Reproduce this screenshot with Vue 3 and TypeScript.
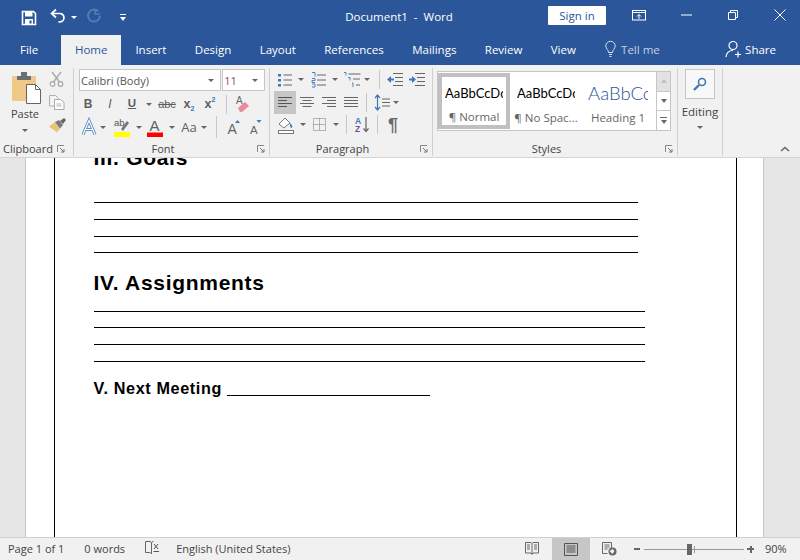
<script setup lang="ts">
const tabs: string[] = ['Insert', 'Design', 'Layout', 'References', 'Mailings', 'Review', 'View']
const goals: number[] = [1, 2, 3, 4]
</script>

<template>
  <div class="app">
    <header class="titlebar">
      <div class="qat">
        <svg class="i-save" width="16" height="16" viewBox="0 0 16 16"><path d="M1.5 1.5h11l2 2v11h-13z" fill="none" stroke="#fff" stroke-width="1.6"/><rect x="4" y="2" width="7.5" height="4.5" fill="#fff"/><rect x="4" y="9" width="8" height="5.5" fill="#fff"/><rect x="8.5" y="10.5" width="2" height="3" fill="#2b579a"/></svg>
        <svg class="i-undo" width="16" height="16" viewBox="0 0 16 16"><path d="M6 1.5 1.5 5.5 6 9.5" fill="none" stroke="#fff" stroke-width="1.7"/><path d="M2 5.5h7.5a4 4 0 0 1 .6 8.3H8.5" fill="none" stroke="#fff" stroke-width="1.7"/></svg>
        <span class="caret w c-undo"></span>
        <svg class="i-redo" width="16" height="16" viewBox="0 0 16 16"><path d="M12.3 3.4A6 6 0 1 0 14 7.8" fill="none" stroke="#5f7fb3" stroke-width="2"/><path d="M9 1v5h5" fill="none" stroke="#5f7fb3" stroke-width="1.6"/></svg>
        <svg class="i-cust" width="6" height="8" viewBox="0 0 6 8"><rect x="0" y="0" width="6" height="1" fill="#fff"/><path d="M0 3h6L3 7z" fill="#fff"/></svg>
      </div>
      <div class="doc-title">Document1&nbsp; -&nbsp; Word</div>
      <button class="signin">Sign in</button>
      <div class="winctl">
        <svg width="14" height="11" viewBox="0 0 14 11"><rect x=".5" y=".5" width="13" height="9.5" fill="none" stroke="#fff"/><path d="M0 2.5h14" stroke="#fff"/><path d="M7 9V4.500M5 6.500l2-2 2 2" fill="none" stroke="#fff"/></svg>
        <svg class="w-min" width="11" height="2" viewBox="0 0 11 2"><path d="M0 1h11" stroke="#fff"/></svg>
        <svg class="w-res" width="10" height="10" viewBox="0 0 10 10"><path d="M.5 2.500h7v7h-7zM2.500 2.500v-2h7v7h-2" fill="none" stroke="#fff"/></svg>
        <svg class="w-cls" width="12" height="12" viewBox="0 0 12 12"><path d="M.5.5l11 11M11.500.5l-11 11" stroke="#fff" fill="none"/></svg>
      </div>
    </header>

    <nav class="tabbar">
      <span class="tab file">File</span>
      <span class="tab home">Home</span>
      <span v-for="t in tabs" :key="t" class="tab">{{ t }}</span>
      <span class="tell">
        <svg width="11" height="17" viewBox="0 0 11 17"><path d="M3.500 11.500C3.500 8.500.8 8 .8 5a4.700 4.700 0 0 1 9.400 0c0 3-2.700 3.500-2.700 6.500zM4 13.500h3M4.500 15.500h2" fill="none" stroke="#d5deec"/></svg>
        <span>Tell me</span>
      </span>
      <span class="share">
        <svg width="18" height="18" viewBox="0 0 18 18"><circle cx="8" cy="5.500" r="4" fill="none" stroke="#fff" stroke-width="1.200"/><path d="M1 17c.5-4 3-6.500 7-6.500" fill="none" stroke="#fff" stroke-width="1.200"/><path d="M13 11.500v6M10 14.500h6" stroke="#fff" stroke-width="1.200"/></svg>
        <span>Share</span>
      </span>
    </nav>

    <section class="ribbon">
      <!-- Clipboard -->
      <div class="group g-clip">
        <div class="g-body clip">
          <div class="paste">
            <svg width="30" height="31" viewBox="0 0 30 31"><rect x="0" y="3" width="24" height="25" rx="1" fill="#efc985"/><path d="M5 3h4V-1h6v4h4v4H5z" fill="#6d6d6d"/><path d="M14.500 11.500h9l5 5v14h-14z" fill="#fff" stroke="#666"/><path d="M23.500 11.500v5h5" fill="none" stroke="#666"/></svg>
            <span class="paste-l">Paste</span>
            <span class="caret"></span>
          </div>
          <div class="clip-side">
            <svg width="15" height="15" viewBox="0 0 15 15"><path d="M3 0l7.500 10M12 0 4.500 10" stroke="#a8a8a8" stroke-width="1.300"/><circle cx="3.500" cy="12" r="2.300" fill="none" stroke="#a8a8a8" stroke-width="1.200"/><circle cx="11.500" cy="12" r="2.300" fill="none" stroke="#a8a8a8" stroke-width="1.200"/></svg>
            <svg width="16" height="15" viewBox="0 0 16 15"><path d="M.5.500h6l3 3v7.500H.5z" fill="#f4f4f4" stroke="#b0b0b0"/><path d="M5.500 4.500h6l3.500 3v7h-9.500z" fill="#fff" stroke="#a8a8a8"/><path d="M7.500 9h5M7.500 11h5" stroke="#b0b0b0"/></svg>
            <svg width="17" height="15" viewBox="0 0 17 15"><path d="M0 8.500 6 4l5 6.500-3 4z" fill="#edc27a"/><path d="M6 4l5 6.500 3-3.500-4-5z" fill="#7a7a7a"/><path d="M11 3l4-3 2 2-3 4z" fill="#666"/></svg>
          </div>
        </div>
        <div class="g-label"><span>Clipboard</span><svg class="launch" width="8" height="8" viewBox="0 0 8 8"><path d="M.5 7V.5H7" fill="none" stroke="#888"/><path d="M3 3l4 4M7 4v3H4" fill="none" stroke="#777"/></svg></div>
      </div>

      <!-- Font -->
      <div class="group g-font">
        <div class="g-body font">
          <div class="combos">
            <div class="combo c-name"><span>Calibri (Body)</span><span class="caret"></span></div>
            <div class="combo c-size"><span>11</span><span class="caret"></span></div>
          </div>
          <div class="font-r2">
            <span class="fmt b">B</span>
            <span class="fmt it">I</span>
            <span class="fmt u">U</span>
            <span class="caret"></span>
            <span class="fmt s">abc</span>
            <span class="fmt x">x<sub>2</sub></span>
            <span class="fmt x">x<sup>2</sup></span>
            <span class="vsep"></span>
            <svg width="16" height="17" viewBox="0 0 16 17"><text x="1" y="8" font-size="10" font-family="Liberation Sans" fill="#666">A</text><path d="M3 12l7-6 4 4-7 6H5z" fill="#e98b9c"/></svg>
          </div>
          <div class="font-r3">
            <svg width="16" height="17" viewBox="0 0 16 17"><path d="M2 15.500 8 1.500l6 14M4.500 10.500h7" fill="none" stroke="#5b8ec6" stroke-width="3"/><path d="M2 15.500 8 1.500l6 14M4.500 10.500h7" fill="none" stroke="#fff" stroke-width="1.100"/></svg>
            <span class="caret"></span>
            <svg width="16" height="19" viewBox="0 0 16 19"><text x="0" y="8" font-size="9.500" font-family="Liberation Sans" fill="#555">ab</text><path d="M7 11l6-8 2 2-6 8z" fill="#777"/><rect y="14" width="16" height="5" fill="#ffff00"/></svg>
            <span class="caret"></span>
            <svg width="16" height="19" viewBox="0 0 16 19"><text x="2.500" y="12.500" font-size="15" font-family="Liberation Sans" fill="#5f5f5f">A</text><rect y="14.500" width="16" height="4.500" fill="#ff0000"/></svg>
            <span class="caret"></span>
            <span class="fmt aa">Aa</span>
            <span class="caret"></span>
            <span class="vsep tall"></span>
            <svg width="16" height="17" viewBox="0 0 16 17"><text x="3.500" y="15" font-size="14" font-family="Liberation Sans" fill="#666">A</text><path d="M11 4l2.500-3L16 4z" fill="#3f78b8"/></svg>
            <svg width="16" height="17" viewBox="0 0 16 17"><text x="4" y="15" font-size="11.500" font-family="Liberation Sans" fill="#666">A</text><path d="M10.500 1l2.500 3 2.500-3z" fill="#3f78b8"/></svg>
          </div>
        </div>
        <div class="g-label"><span>Font</span><svg class="launch" width="8" height="8" viewBox="0 0 8 8"><path d="M.5 7V.5H7" fill="none" stroke="#888"/><path d="M3 3l4 4M7 4v3H4" fill="none" stroke="#777"/></svg></div>
      </div>

      <!-- Paragraph -->
      <div class="group g-para">
        <div class="g-body para">
          <div class="para-r1">
            <svg width="14" height="16" viewBox="0 0 14 16"><path d="M0 2h3v2.500H0zM0 7h3v2.500H0zM0 12h3v2.500H0z" fill="#3f78b8"/><path d="M5.500 3h8.500M5.500 8h8.500M5.500 13h8.500" stroke="#666"/></svg>
            <span class="caret"></span>
            <svg width="14" height="16" viewBox="0 0 14 16"><path d="M0 .5h3v4M0 6.500h3v2H0v2h3M0 12h3v3H0" fill="none" stroke="#3f78b8" stroke-width=".900"/><path d="M5 3h9M5 8h9M5 13h9" stroke="#666"/></svg>
            <span class="caret"></span>
            <svg width="17" height="16" viewBox="0 0 17 16"><path d="M0 .5h2v3M4 5.500h2v3M8 11h1v4" fill="none" stroke="#3f78b8" stroke-width=".900"/><path d="M4.500 2h12M9 7h7M12 13h4" stroke="#666"/></svg>
            <span class="caret"></span>
            <span class="vsep"></span>
            <svg width="16" height="13" viewBox="0 0 16 13"><path d="M6 .5h10M8 4.500h8M8 8.500h8M6 12.500h10" stroke="#666"/><path d="M0 6.500 4 3v2.500h3v2H4V10z" fill="#3f78b8"/></svg>
            <svg width="16" height="13" viewBox="0 0 16 13"><path d="M6 .5h10M8 4.500h8M8 8.500h8M6 12.500h10" stroke="#666"/><path d="M7 6.500 3 3v2.500H0v2h3V10z" fill="#3f78b8"/></svg>
          </div>
          <div class="para-r2">
            <span class="al active"><svg width="14" height="11" viewBox="0 0 14 11"><path d="M0 .5h14M0 3.500h9M0 6.500h14M0 9.500h9" stroke="#555"/></svg></span>
            <span class="al"><svg width="14" height="11" viewBox="0 0 14 11"><path d="M0 .5h14M2.500 3.500h9M0 6.500h14M2.500 9.500h9" stroke="#666"/></svg></span>
            <span class="al"><svg width="14" height="11" viewBox="0 0 14 11"><path d="M0 .5h14M5 3.500h9M0 6.500h14M5 9.500h9" stroke="#666"/></svg></span>
            <span class="al"><svg width="14" height="11" viewBox="0 0 14 11"><path d="M0 .5h14M0 3.500h14M0 6.500h14M0 9.500h14" stroke="#666"/></svg></span>
            <span class="vsep"></span>
            <svg width="15" height="17" viewBox="0 0 15 17"><path d="M2.500 1.500v14M0 4l2.500-3L5 4M0 13l2.500 3L5 13" fill="none" stroke="#3f78b8" stroke-width="1.200"/><path d="M7 5h8M7 8.500h8M7 12h8" stroke="#666"/></svg>
            <span class="caret"></span>
          </div>
          <div class="para-r3">
            <svg width="16" height="18" viewBox="0 0 16 18"><path d="M1 8l6-6 5 5-6 5z" fill="#fff" stroke="#777"/><path d="M12 7c1.500 1.500 3 3 2 4.500S11.500 10 12 7z" fill="#3f78b8"/><rect x=".5" y="14.500" width="15" height="3" fill="#fff" stroke="#777"/></svg>
            <span class="caret"></span>
            <svg width="13" height="13" viewBox="0 0 13 13"><path d="M.5.500h12v12H.5zM6.500.500v12M.5 6.500h12" fill="none" stroke="#777" stroke-dasharray="1 1"/></svg>
            <span class="caret"></span>
            <span class="vsep"></span>
            <svg width="15" height="17" viewBox="0 0 15 17"><text x="0" y="7.500" font-size="8.500" font-weight="700" font-family="Liberation Sans" fill="#3f78b8">A</text><text x="0" y="16" font-size="8.500" font-weight="700" font-family="Liberation Sans" fill="#7b4a9e">Z</text><path d="M11 1v14M8.500 12.500l2.500 3 2.500-3" fill="none" stroke="#666" stroke-width="1.200"/></svg>
            <span class="vsep"></span>
            <span class="pilcrow">¶</span>
          </div>
        </div>
        <div class="g-label"><span>Paragraph</span><svg class="launch" width="8" height="8" viewBox="0 0 8 8"><path d="M.5 7V.5H7" fill="none" stroke="#888"/><path d="M3 3l4 4M7 4v3H4" fill="none" stroke="#777"/></svg></div>
      </div>

      <!-- Styles -->
      <div class="group g-styles">
        <div class="g-body styles">
          <div class="gallery">
            <div class="style sel"><span class="prev">AaBbCcDc</span><span class="sname">¶ Normal</span></div>
            <div class="style"><span class="prev">AaBbCcDc</span><span class="sname">¶ No Spac...</span></div>
            <div class="style"><span class="prev h1">AaBbCc</span><span class="sname">Heading 1</span></div>
          </div>
          <div class="scroller">
            <span class="sc up"><i class="tri-up"></i></span>
            <span class="sc"><i class="tri-dn"></i></span>
            <span class="sc more"><i class="bar"></i><i class="tri-dn"></i></span>
          </div>
        </div>
        <div class="g-label"><span>Styles</span><svg class="launch" width="8" height="8" viewBox="0 0 8 8"><path d="M.5 7V.5H7" fill="none" stroke="#888"/><path d="M3 3l4 4M7 4v3H4" fill="none" stroke="#777"/></svg></div>
      </div>

      <!-- Editing -->
      <div class="group g-edit">
        <div class="g-body edit">
          <span class="find"><svg width="14" height="14" viewBox="0 0 14 14"><circle cx="9" cy="5" r="3.500" fill="none" stroke="#3f78b8" stroke-width="1.600"/><path d="M6 8 1 13" stroke="#3f78b8" stroke-width="2.400"/></svg></span>
          <span class="edit-l">Editing</span>
          <span class="caret"></span>
        </div>
      </div>
      <div class="collapse"><svg width="10" height="6" viewBox="0 0 10 6"><path d="M1 5l4-3.500L9 5" fill="none" stroke="#666" stroke-width="1.600"/></svg></div>
    </section>

    <main class="workspace">
      <div class="page">
        <div class="frame">
          <h2 class="h-goals">III. Goals</h2>
          <div class="rules r-a"><i v-for="n in goals" :key="n"></i></div>
          <h2 class="h-assign">IV. Assignments</h2>
          <div class="rules r-b"><i v-for="n in goals" :key="n"></i></div>
          <h3 class="h-next">V. Next Meeting <span class="blank"></span></h3>
        </div>
      </div>
      <div class="vscroll"></div>
    </main>

    <footer class="status">
      <span class="st st-page">Page 1 of 1</span>
      <span class="st st-words">0 words</span>
      <svg class="st-proof" width="14" height="14" viewBox="0 0 14 14"><path d="M6.500 13 5 11.500H.5V.5h5L6.500 2v11M6.500 2l1-1.500h1" fill="none" stroke="#666"/><path d="M9 3l4 5M13 3 9 8" stroke="#555"/><path d="M8.500 10.500H14" stroke="#555"/></svg>
      <span class="st st-lang">English (United States)</span>
      <span class="spacer"></span>
      <svg class="v-read" width="14" height="13" viewBox="0 0 14 13"><path d="M.5.500h5.500L7 1.500 8 .500h5.500V11H8L7 12.500 6 11H.5zM7 1.500V12M2 3h3M2 5h3M2 7h3M9 3h3M9 5h3M9 7h3" fill="none" stroke="#666"/></svg>
      <span class="v-print"><svg width="14" height="13" viewBox="0 0 14 13"><path d="M.5.500h13v12H.5zM2.500 3h9M2.500 5h9M2.500 7h9M2.500 9h9" fill="none" stroke="#555"/></svg></span>
      <svg class="v-web" width="15" height="14" viewBox="0 0 15 14"><path d="M.5.500h9v6M.5.500v11h5M2.500 3h5M2.500 5h5M2.500 7h3" fill="none" stroke="#666"/><circle cx="10.500" cy="9.500" r="4" fill="#666"/><path d="M7.500 9l3-2 2 2-2 3z" fill="#f1f1f1"/></svg>
      <span class="z-minus"></span>
      <span class="slider"><i class="thumb"></i><i class="tick"></i></span>
      <span class="z-plus"></span>
      <span class="st st-zoom">90%</span>
    </footer>
  </div>
</template>

<style>
html, body { margin: 0; padding: 0; }
</style>

<style scoped>
.app { width: 800px; height: 560px; overflow: hidden; display: flex; flex-direction: column; font-family: "Open Sans", "Noto Sans", sans-serif; color: #444; background: #f1f1f1; }
svg { display: block; flex: none; overflow: visible; }

.titlebar { height: 35px; flex: none; background: #2b579a; display: flex; align-items: center; position: relative; color: #fff; }
.qat { display: flex; align-items: center; padding-left: 21px; width: 130px; box-sizing: border-box; }
.i-undo { margin-left: 13px; margin-top: -3px; }
.c-undo { margin-left: 5px; }
.i-redo { margin-left: 9px; margin-top: -3px; opacity: .9; }
.i-cust { margin-left: 18px; margin-top: 1px; }
.doc-title { width: 300px; text-align: center; font-size: 11.500px; margin-left: 119px; margin-top: -3px; white-space: nowrap; }
.signin { width: 58px; height: 19px; border: 0; padding: 0; background: #fff; color: #2b579a; border-radius: 1px; font: 11.500px "Open Sans", sans-serif; margin-top: -4px; margin-left: -1px; }
.winctl { display: flex; align-items: center; margin-left: 26px; margin-top: -5px; }
.w-min { margin-left: 35px; }
.w-res { margin-left: 36px; }
.w-cls { margin-left: 36px; }

.tabbar { height: 30px; flex: none; background: #2b579a; display: flex; align-items: stretch; color: #fff; font-size: 11.500px; position: relative; }
.tab { display: flex; align-items: center; padding: 0 14.200px 2px; white-space: nowrap; }
.file { padding: 0 23px 2px 20px; }
.home { background: #f1f1f1; color: #2b579a; padding: 0 0 2px; width: 60px; justify-content: center; }
.tell { display: flex; align-items: center; gap: 5px; margin-left: 15px; color: #c3d0e4; padding-bottom: 2px; }
.share { display: flex; align-items: center; gap: 2px; margin-left: auto; margin-right: 24px; padding-bottom: 2px; }

.ribbon { height: 93px; flex: none; box-sizing: border-box; background: #f1f1f1; border-bottom: 1px solid #d4d4d4; display: flex; align-items: stretch; font-size: 11px; position: relative; }
.group { display: flex; flex-direction: column; position: relative; box-sizing: border-box; border-right: 1px solid #d0d0d0; margin: 3px 0 1px; }
.g-body { flex: 1; min-height: 0; }
.g-label { height: 15px; display: flex; justify-content: center; align-items: center; position: relative; font-size: 11px; color: #444; padding-right: 17px; }
.launch { position: absolute; right: 4px; top: 4px; }
.g-clip { width: 74px; }
.g-font { width: 196px; }
.g-para { width: 163px; }
.g-styles { width: 245px; }
.g-edit { width: 45px; }
.g-clip .launch { right: 8px; }

.caret { display: inline-block; width: 0; height: 0; border-left: 3px solid transparent; border-right: 3px solid transparent; border-top: 3px solid #666; flex: none; justify-self: center; }
.caret.w { border-top-color: #fff; }
.vsep { display: block; width: 1px; height: 19px; background: #c8c8c8; justify-self: center; }
.vsep.tall { height: 22px; }

.clip { display: flex; padding: 5px 0 0 13px; }
.paste { display: flex; flex-direction: column; align-items: center; width: 28px; }
.paste-l { margin: 2px 4px 0 0; font-size: 11px; color: #444; line-height: 16px; }
.paste .caret { margin: 7px 4px 0 0; }
.clip-side { display: flex; flex-direction: column; gap: 8px; margin-left: 8px; margin-top: -1px; }

.font { padding: 1px 4px 0 5px; }
.combos { display: flex; gap: 1px; }
.combo { height: 22px; box-sizing: border-box; border: 1px solid #c6c6c6; background: #fff; display: flex; align-items: center; justify-content: space-between; padding: 0 6px 0 1px; font-size: 11px; color: #555; }
.c-name { width: 143px; }
.c-size { width: 43px; color: #8a4a5a; }
.font-r2 { display: grid; grid-template-columns: 18px 26px 18px 16px 20px 24px 18px 14px 20px; align-items: center; justify-items: center; height: 20px; margin-top: 3px; }
.font-r3 { display: grid; grid-template-columns: 20px 8px 30px 4px 28px 6px 28px 2px 22px 10px 34px; align-items: center; justify-items: center; height: 22px; margin-top: 2px; }
.fmt { font-family: "Liberation Sans", sans-serif; color: #5f5f5f; line-height: 1; }
.b { font-weight: 700; font-size: 12px; }
.it { font-style: italic; font-size: 12px; }
.u { font-weight: 700; font-size: 11.500px; text-decoration: underline; }
.s { font-size: 11px; text-decoration: line-through; }
.x { font-weight: 700; font-size: 12.500px; display: inline-flex; }
.x sub, .x sup { font-size: 7px; color: #3f78b8; line-height: 1; }
.x sub { align-self: flex-end; margin-bottom: -2px; }
.x sup { align-self: flex-start; margin-top: -2px; }
.aa { font-family: "Open Sans", sans-serif; font-size: 13px; }

.para { padding: 2px 0 0 4px; }
.para-r1 { display: grid; grid-template-columns: 20px 12px 24px 8px 26px 4px 20px 12px 32px; align-items: center; justify-items: center; height: 17px; padding-left: 1px; }
.para-r2 { display: grid; grid-template-columns: 22px 22px 22px 22px 8px 24px 4px; align-items: center; justify-items: center; height: 23px; margin-top: 4px; }
.al { width: 22px; height: 23px; display: flex; align-items: center; justify-content: center; }
.al.active { background: #c6c6c6; }
.para-r3 { display: grid; grid-template-columns: 22px 11px 22px 11px 11px 20px 11px 20px; align-items: center; justify-items: center; height: 19px; margin-top: 1px; padding-left: 1px; }
.pilcrow { font-family: "Liberation Sans", sans-serif; font-size: 18px; font-weight: 700; color: #6a6a6a; line-height: 1; }

.styles { display: flex; padding: 3px 0 0 4px; }
.gallery { width: 220px; height: 60px; box-sizing: border-box; border: 1px solid #c6c6c6; background: #fff; display: flex; }
.style { width: 72px; flex: none; display: flex; flex-direction: column; align-items: center; box-sizing: border-box; overflow: hidden; height: 56px; margin-top: 1px; padding-top: 9px; }
.style.sel { border: 4px solid #c0c0c0; padding-top: 5px; }
.prev { font-family: Lato, "Liberation Sans", sans-serif; font-size: 13px; color: #000; line-height: 22px; width: 58px; overflow: hidden; white-space: nowrap; height: 22px; }
.prev.h1 { font-size: 18.500px; color: #2f5496; font-weight: 300; width: 60px; }
.sname { font-size: 11.500px; color: #666; margin-top: 6px; white-space: nowrap; line-height: 16px; }
.scroller { width: 14px; height: 60px; display: flex; flex-direction: column; box-sizing: border-box; border: 1px solid #c6c6c6; border-left: 0; }
.sc { flex: 1; display: flex; flex-direction: column; gap: 2px; align-items: center; justify-content: center; background: #fff; border-bottom: 1px solid #c6c6c6; }
.sc.up { background: #e2e2e2; }
.sc.more { border-bottom: 0; }
.tri-up { width: 0; height: 0; border-left: 3.500px solid transparent; border-right: 3.500px solid transparent; border-bottom: 4px solid #bdbdbd; }
.tri-dn { width: 0; height: 0; border-left: 3.500px solid transparent; border-right: 3.500px solid transparent; border-top: 4px solid #666; }
.bar { width: 7px; height: 1px; background: #666; }

.edit { display: flex; flex-direction: column; align-items: center; padding-top: 1px; }
.find { width: 30px; height: 30px; box-sizing: border-box; border: 1px solid #c6c6c6; background: #f8f8f8; display: flex; align-items: center; justify-content: center; }
.edit-l { font-size: 11.500px; margin-top: 5px; line-height: 16px; color: #444; }
.edit .caret { margin-top: 6px; }
.collapse { margin-left: auto; margin-right: 10px; align-self: flex-end; margin-bottom: 5px; }

.workspace { flex: 1; min-height: 0; display: flex; background: #e6e6e6; padding-left: 25px; }
.page { width: 739px; flex: none; box-sizing: border-box; background: #fff; border-left: 1px solid #c6c6c6; border-right: 1px solid #c6c6c6; padding-left: 28px; overflow: hidden; }
.frame { width: 683px; height: 100%; box-sizing: border-box; border-left: 1.500px solid #000; border-right: 1.500px solid #000; padding-left: 38.500px; font-family: "Liberation Sans", Arial, sans-serif; color: #000; overflow: hidden; }
.h-goals { margin: -13px 0 0; font-size: 21px; letter-spacing: .7px; line-height: 25px; font-weight: 700; }
.rules { display: flex; flex-direction: column; }
.rules i { display: block; height: 1px; background: #000; margin-top: 16px; }
.r-a { width: 544px; margin-top: 16px; }
.r-a i:nth-child(4) { margin-top: 15px; }
.h-assign { margin: 17px 0 0; font-size: 21px; letter-spacing: .7px; line-height: 25px; font-weight: 700; }
.r-b { width: 551px; margin-top: 0; }
.r-b i:nth-child(2) { margin-top: 15px; }
.h-next { margin: 17px 0 0; font-size: 16.200px; letter-spacing: .63px; line-height: 18px; font-weight: 700; white-space: nowrap; }
.blank { display: inline-block; width: 203px; border-bottom: 1.500px solid #000; height: 16px; vertical-align: top; margin-top: 0; }
.vscroll { flex: 1; background: #e6e6e6; }

.status { height: 23px; flex: none; box-sizing: border-box; border-top: 1px solid #d0d0d0; background: #f1f1f1; display: flex; align-items: center; font-size: 11px; color: #444; }
.st { white-space: nowrap; margin-top: -2px; }
.st-page { margin-left: 8px; }
.st-words { margin-left: 20px; }
.st-proof { margin-left: 20px; margin-top: -2px; }
.st-lang { margin-left: 17px; }
.spacer { flex: 1; }
.v-read { margin-right: 13px; margin-top: -1px; }
.v-print { width: 38px; height: 22px; background: #c6c6c6; display: flex; align-items: center; justify-content: center; }
.v-web { margin-left: 12px; margin-top: -1px; }
.z-minus { width: 6px; height: 2px; background: #666; margin-left: 17px; }
.slider { width: 100px; height: 1px; background: #9a9a9a; margin-left: 4px; position: relative; }
.thumb { position: absolute; left: 43px; top: -5px; width: 5px; height: 11px; background: #666; }
.tick { position: absolute; left: 50px; top: -3px; width: 1px; height: 7px; background: #9a9a9a; }
.z-plus { width: 7px; height: 7px; margin-left: 3px; background: linear-gradient(#666, #666) center / 7px 2px no-repeat, linear-gradient(#666, #666) center / 2px 7px no-repeat; }
.st-zoom { margin-left: 11px; margin-right: 14px; width: 21px; }
</style>
